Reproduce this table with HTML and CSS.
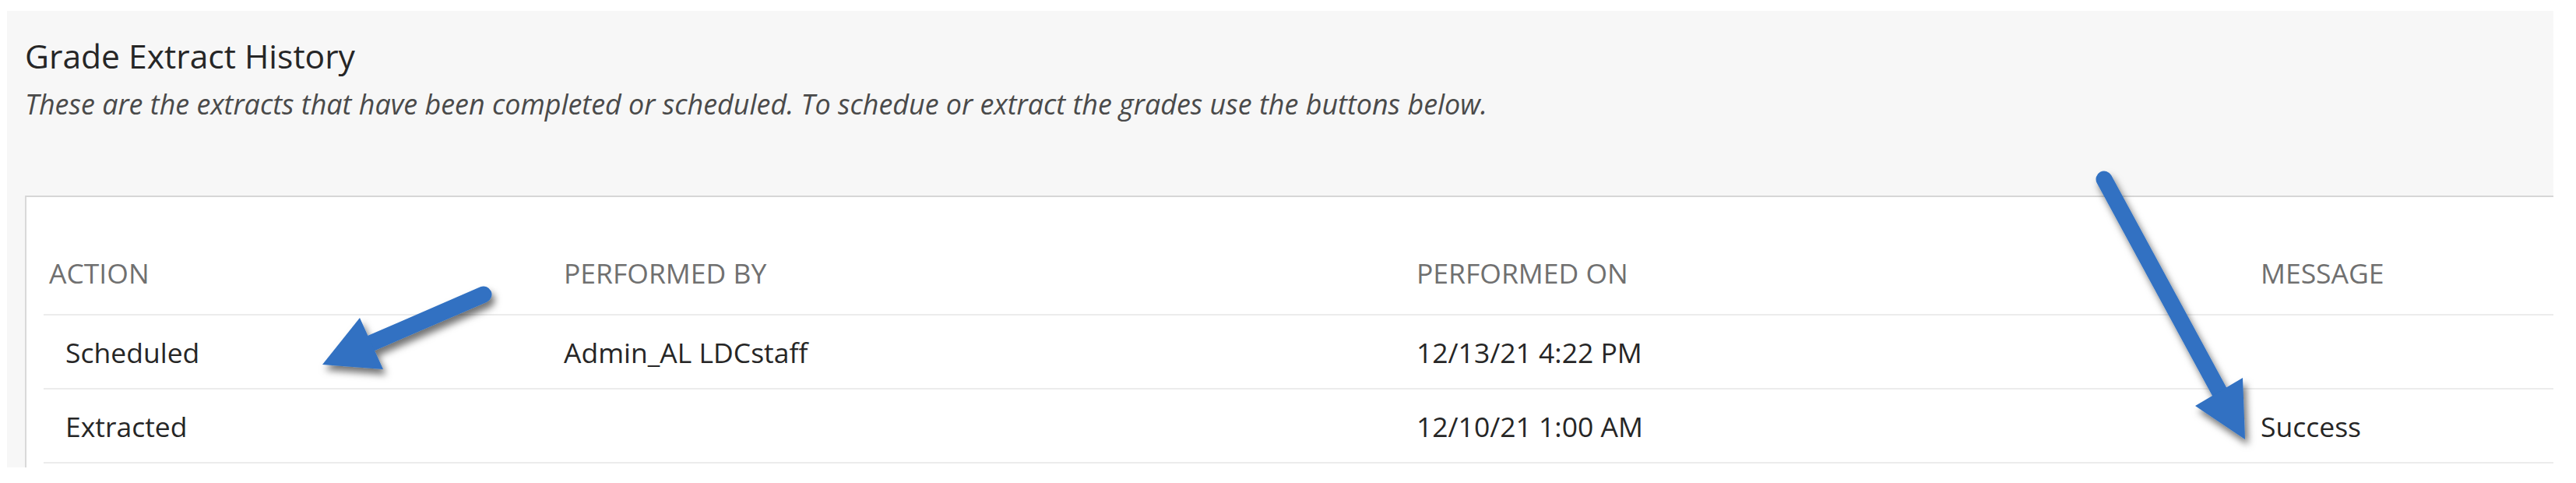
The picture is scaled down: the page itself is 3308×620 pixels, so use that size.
FILE: index.html
```html
<!DOCTYPE html>
<html lang="en">
<head>
<meta charset="utf-8">
<title>Grade Extract History</title>
<link rel="stylesheet" href="styles.css">
</head>
<body>
<main class="panel">
  <h1 class="panel-title">Grade Extract History</h1>
  <p class="panel-subtitle">These are the extracts that have been completed or scheduled. To schedue or extract the grades use the buttons below.</p>
  <section class="history-box">
    <table class="history">
      <colgroup>
        <col class="col-action">
        <col class="col-by">
        <col class="col-on">
        <col class="col-msg">
      </colgroup>
      <thead>
        <tr>
          <th>ACTION</th>
          <th>PERFORMED BY</th>
          <th>PERFORMED ON</th>
          <th>MESSAGE</th>
        </tr>
      </thead>
      <tbody>
        <tr>
          <td class="cell-action">Scheduled</td>
          <td>Admin_AL LDCstaff</td>
          <td>12/13/21 4:22 PM</td>
          <td></td>
        </tr>
        <tr>
          <td class="cell-action">Extracted</td>
          <td></td>
          <td>12/10/21 1:00 AM</td>
          <td>Success</td>
        </tr>
      </tbody>
    </table>
  </section>
</main>
<svg class="annotations" width="3308" height="620" viewBox="0 0 3308 620" aria-hidden="true">
  <defs>
    <filter id="shadow" x="-20%" y="-20%" width="140%" height="140%">
      <feDropShadow dx="4" dy="7" stdDeviation="5" flood-color="#000" flood-opacity="0.55"/>
    </filter>
  </defs>
  <g class="arrow" filter="url(#shadow)">
    <line x1="612" y1="364" x2="462" y2="429" stroke="#3071c2" stroke-width="21" stroke-linecap="round"/>
    <polygon points="405,454 453,394 483,460" fill="#3071c2"/>
  </g>
  <g class="arrow" filter="url(#shadow)">
    <line x1="2693" y1="216" x2="2845" y2="496" stroke="#3071c2" stroke-width="21" stroke-linecap="round"/>
    <polygon points="2874,550 2871,471 2810,507" fill="#3071c2"/>
  </g>
</svg>
</body>
</html>
```

FILE: styles.css
```css
html, body {
  background: #ffffff;
}

body {
  margin: 14px 29px 20px 9px;
  font-family: "Open Sans", "Liberation Sans", sans-serif;
  color: #262626;
  position: relative;
}

.panel {
  background: #f7f7f7;
  height: 586px;
  overflow: hidden;
  padding: 28px 0 0 23px;
  box-sizing: border-box;
}

.panel-title {
  margin: 0;
  font-size: 42.6px;
  font-weight: 400;
  line-height: 58px;
  color: #262626;
}

.panel-subtitle {
  margin: 10px 0 0;
  font-size: 35.9px;
  font-style: italic;
  line-height: 48px;
  color: #4a4a4a;
}

.history-box {
  margin-top: 93px;
  background: #ffffff;
  border-top: 2px solid #d6d6d6;
  border-left: 2px solid #d9d9d9;
  padding-left: 22px;
  height: 400px;
}

.history {
  width: 100%;
  border-collapse: collapse;
  table-layout: fixed;
  font-size: 35.5px;
  line-height: 48px;
}

.col-action { width: 661px; }
.col-by { width: 1095px; }
.col-on { width: 1084px; }

.history th {
  text-align: left;
  font-weight: 400;
  color: #707070;
  padding: 73px 7px 29px;
  border-bottom: 2px solid #ececec;
  white-space: nowrap;
}

.history td {
  padding: 23px 7px 22px;
  border-bottom: 2px solid #ececec;
  color: #262626;
  white-space: nowrap;
  height: 48px;
}

.history td.cell-action {
  padding-left: 28px;
}

.annotations {
  position: absolute;
  left: 0;
  top: 0;
  pointer-events: none;
  overflow: visible;
}
```
